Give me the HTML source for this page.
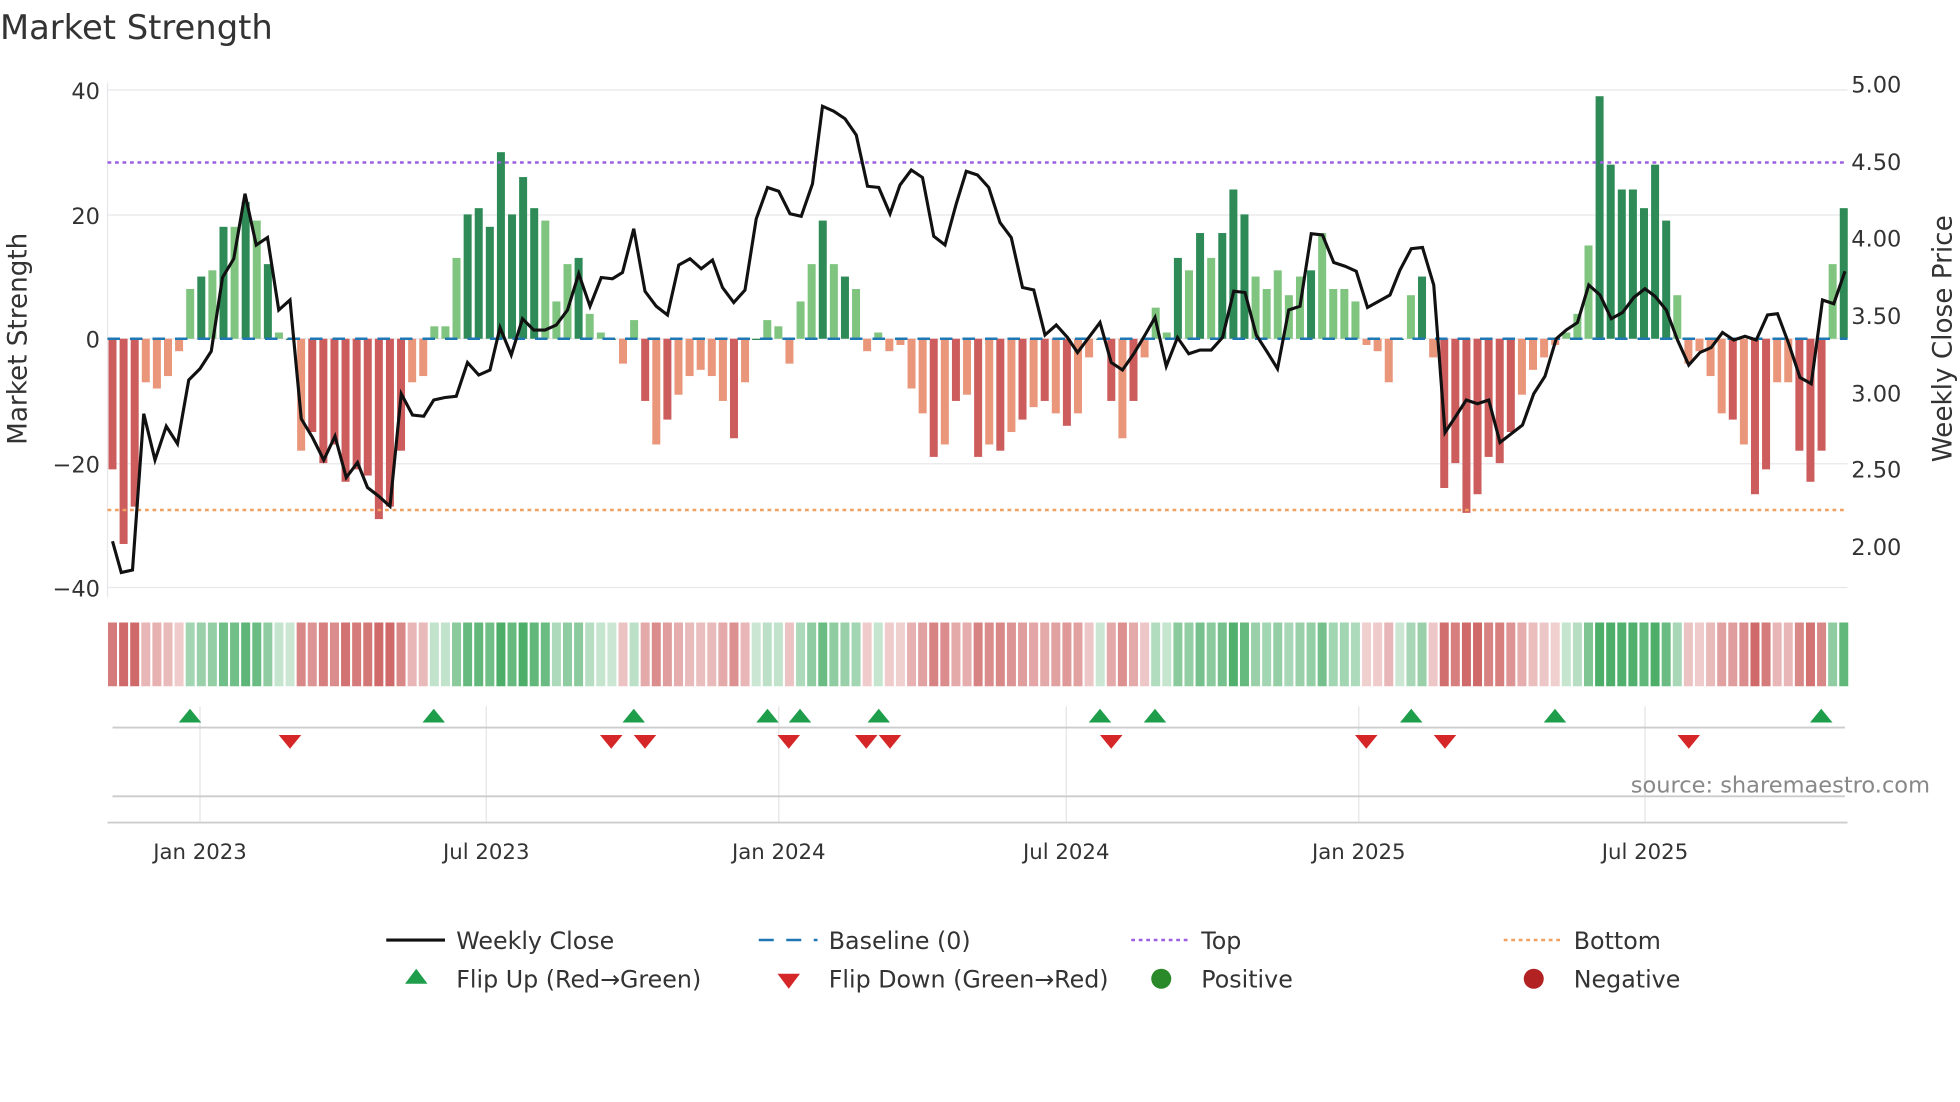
<!DOCTYPE html>
<html><head><meta charset="utf-8"><style>
html,body{margin:0;padding:0;background:#fff;}
svg{display:block;font-family:"DejaVu Sans","Liberation Sans",sans-serif;}
</style></head><body>
<svg id="s" width="1960" height="1102" viewBox="0 0 1568 881.6" xmlns="http://www.w3.org/2000/svg">
<rect width="1568" height="882" fill="#fff"/>
<text x="0" y="31" font-size="27" fill="#333">Market Strength</text>
<g stroke="#e8e8ec" stroke-width="1">
<line x1="86" y1="72" x2="1478" y2="72"/><line x1="86" y1="172" x2="1478" y2="172"/><line x1="86" y1="271" x2="1478" y2="271"/><line x1="86" y1="371" x2="1478" y2="371"/><line x1="86" y1="470" x2="1478" y2="470"/>
<line x1="86" y1="66" x2="86" y2="478"/>
</g>
<g font-size="18" fill="#333" text-anchor="end">
<text x="80" y="79">40</text><text x="80" y="179">20</text><text x="80" y="278">0</text><text x="80" y="378">−20</text><text x="80" y="477">−40</text>
</g>
<g font-size="18" fill="#333">
<text x="1481" y="74">5.00</text><text x="1481" y="136">4.50</text><text x="1481" y="197">4.00</text><text x="1481" y="259">3.50</text><text x="1481" y="321">3.00</text><text x="1481" y="382">2.50</text><text x="1481" y="444">2.00</text>
</g>
<text transform="translate(21,271) rotate(-90)" font-size="21" fill="#333" text-anchor="middle">Market Strength</text>
<text transform="translate(1561,271) rotate(-90)" font-size="21" fill="#333" text-anchor="middle">Weekly Close Price</text>
<g id="bars"></g>
<line x1="86" y1="271" x2="1478" y2="271" stroke="#1f77b4" stroke-width="2" stroke-dasharray="10,8"/>
<line x1="86" y1="130" x2="1478" y2="130" stroke="#9b5fe0" stroke-width="2" stroke-dasharray="3,3"/>
<line x1="86" y1="408" x2="1478" y2="408" stroke="#f0a060" stroke-width="2" stroke-dasharray="3,3"/>
<polyline id="price" fill="none" stroke="#111" stroke-width="2.5"/>
<g id="strip"></g>
<g stroke="#e4e4e8" stroke-width="1">
<line x1="160" y1="565" x2="160" y2="658"/><line x1="389" y1="565" x2="389" y2="658"/><line x1="623" y1="565" x2="623" y2="658"/><line x1="853" y1="565" x2="853" y2="658"/><line x1="1087" y1="565" x2="1087" y2="658"/><line x1="1316" y1="565" x2="1316" y2="658"/>
</g>
<line x1="90" y1="582" x2="1476" y2="582" stroke="#ccc" stroke-width="1.5"/>
<line x1="90" y1="637" x2="1476" y2="637" stroke="#ccc" stroke-width="1.5"/>
<line x1="86" y1="658" x2="1478" y2="658" stroke="#ccc" stroke-width="1.5"/>
<g id="marks"></g>
<text x="1544" y="634" font-size="18" fill="#888" text-anchor="end">source: sharemaestro.com</text>
<g font-size="17" fill="#333" text-anchor="middle">
<text x="160" y="687">Jan 2023</text><text x="389" y="687">Jul 2023</text><text x="623" y="687">Jan 2024</text><text x="853" y="687">Jul 2024</text><text x="1087" y="687">Jan 2025</text><text x="1316" y="687">Jul 2025</text>
</g>
<g font-size="19" fill="#333">
<line x1="309" y1="752" x2="356" y2="752" stroke="#111" stroke-width="2.5"/><text x="365" y="759">Weekly Close</text>
<line x1="607" y1="752" x2="654" y2="752" stroke="#1f77b4" stroke-width="2" stroke-dasharray="12,10"/><text x="663" y="759">Baseline (0)</text>
<line x1="905" y1="752" x2="952" y2="752" stroke="#9b5fe0" stroke-width="2" stroke-dasharray="3,3"/><text x="961" y="759">Top</text>
<line x1="1203" y1="752" x2="1250" y2="752" stroke="#f0a060" stroke-width="2" stroke-dasharray="3,3"/><text x="1259" y="759">Bottom</text>
<polygon points="333,775 324,787 342,787" fill="#1e9e4a"/><text x="365" y="790">Flip Up (Red→Green)</text>
<polygon points="622,779 640,779 631,791" fill="#d62728"/><text x="663" y="790">Flip Down (Green→Red)</text>
<circle cx="929" cy="783" r="8" fill="#2a8a2a"/><text x="961" y="790">Positive</text>
<circle cx="1227" cy="783" r="8" fill="#b22222"/><text x="1259" y="790">Negative</text>
</g>
</svg>
<script>
var v=[-21,-33,-27,-7,-8,-6,-2,8,10,11,18,18,22,19,12,1,0,-18,-15,-20,-17,-23,-21,-22,-29,-27,-18,-7,-6,2,2,13,20,21,18,30,20,26,21,19,6,12,13,4,1,0,-4,3,-10,-17,-13,-9,-6,-5,-6,-10,-16,-7,0,3,2,-4,6,12,19,12,10,8,-2,1,-2,-1,-8,-12,-19,-17,-10,-9,-19,-17,-18,-15,-13,-11,-10,-12,-14,-12,-3,0,-10,-16,-10,-3,5,1,13,11,17,13,17,24,20,10,8,11,7,10,11,17,8,8,6,-1,-2,-7,0,7,10,-3,-24,-20,-28,-25,-19,-20,-15,-9,-5,-3,-1,1,4,15,39,28,24,24,21,28,19,7,-4,-2,-6,-12,-13,-17,-25,-21,-7,-7,-18,-23,-18,12,21];
var n=v.length,x0=90,x1=1475,dx=(x1-x0)/(n-1),b='',st='';
for(var i=0;i<n;i++){var x=x0+i*dx,a=v[i],h=Math.abs(a)*4.975,y=a>=0?271-h:271;
var c=a>=0?(a>=10&&i%2==0||a>=20?'#2e8b57':'#7fc47f'):(a<=-10&&i%2==0||a<=-20?'#cd5c5c':'#e9967a');
if(a==0)c='#2e8b57';
b+='<rect x="'+(x-3.2)+'" y="'+y+'" width="6.4" height="'+Math.max(h,1)+'" fill="'+c+'"/>';
var t=Math.min(Math.abs(a)/25,1);
var sc=a>=0?'rgba(46,160,80,'+(0.25+0.6*t)+')':'rgba(200,80,80,'+(0.25+0.6*t)+')';
st+='<rect x="'+(x-3.6)+'" y="498" width="7.2" height="51" fill="'+sc+'"/>';}
document.getElementById('bars').innerHTML=b;document.getElementById('strip').innerHTML=st;
var p=[90,433,97,458,106,456,115,331,124,368,133,341,142,355,151,304,160,295,169,281,178,222,187,207,196,155,205,196,214,190,223,248,232,240,241,335,250,350,259,368,268,349,277,382,286,370,294,390,303,397,312,405,321,315,330,332,339,333,347,320,356,318,365,317,374,290,383,300,392,296,400,262,409,284,418,255,427,264,436,264,445,260,454,248,463,219,472,245,481,222,490,223,498,218,507,183,516,233,525,245,534,252,543,212,552,207,561,215,570,208,578,230,587,242,596,232,605,175,614,150,623,153,632,171,641,173,650,147,658,85,667,89,676,95,685,108,694,149,703,150,712,171,720,148,729,136,738,142,747,189,756,196,765,163,773,137,782,140,791,150,800,178,809,190,818,230,827,232,836,268,845,260,854,270,862,282,871,270,880,258,889,290,898,296,907,283,916,268,924,254,933,293,942,270,951,283,960,280,969,280,978,270,987,233,996,234,1005,268,1014,282,1022,295,1031,248,1040,245,1049,187,1058,188,1067,210,1076,213,1085,217,1094,246,1103,241,1112,236,1120,216,1129,199,1138,198,1147,228,1156,346,1164,334,1173,320,1182,323,1191,320,1200,354,1209,347,1218,340,1227,315,1236,301,1245,271,1253,264,1262,258,1271,228,1280,236,1289,255,1298,250,1307,238,1316,231,1324,237,1333,248,1342,272,1351,292,1360,282,1369,278,1378,266,1387,272,1396,269,1405,272,1414,252,1422,251,1431,275,1440,302,1449,307,1458,240,1467,243,1476,217];
var ps='';for(var j=0;j<p.length;j+=2)ps+=p[j]+','+p[j+1]+' ';
document.getElementById('price').setAttribute('points',ps);
var up=[152,347,507,614,640,703,880,924,1129,1244,1457],dn=[232,489,516,631,693,712,889,1093,1156,1351],m='';
up.forEach(function(x){m+='<polygon points="'+x+',567 '+(x-9)+',578 '+(x+9)+',578" fill="#1e9e4a"/>';});
dn.forEach(function(x){m+='<polygon points="'+(x-9)+',588 '+(x+9)+',588 '+x+',599" fill="#d62728"/>';});
document.getElementById('marks').innerHTML=m;
</script>
</body></html>
